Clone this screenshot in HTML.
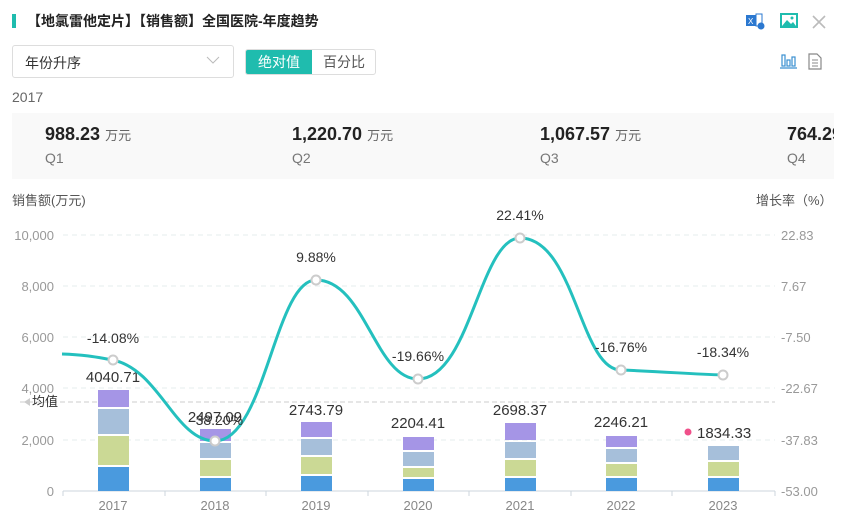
<!DOCTYPE html>
<html><head><meta charset="utf-8"><style>
*{margin:0;padding:0;box-sizing:border-box}
body{width:844px;height:524px;background:#fff;font-family:"Liberation Sans","Noto Sans CJK SC",sans-serif;position:relative;overflow:hidden;color:#333}
.a{position:absolute}
</style></head><body>
<div class="a" style="left:12px;top:14px;width:4px;height:14px;background:#1fbcae"></div>
<div class="a" style="left:27px;top:11px;font-size:14px;font-weight:bold;color:#222">【地氯雷他定片】【销售额】全国医院-年度趋势</div>
<svg class="a" style="left:746px;top:12px" width="20" height="18"><rect x="0" y="3" width="10" height="11" fill="#2b78d0"/><text x="2" y="12" font-size="8" fill="#fff" font-family="Liberation Sans">X</text><rect x="10" y="2" width="6" height="12" fill="none" stroke="#2b78d0"/><circle cx="15" cy="14" r="3.5" fill="#2b78d0"/></svg>
<svg class="a" style="left:780px;top:13px" width="18" height="16"><rect x="1" y="1" width="16" height="13" fill="none" stroke="#1fbcae" stroke-width="2"/><path d="M2 13 L7 7 L11 11 L13 9 L16 13Z" fill="#1fbcae"/><circle cx="12" cy="5" r="1.5" fill="#1fbcae"/></svg>
<svg class="a" style="left:811px;top:14px" width="16" height="16"><path d="M2 2L14 14M14 2L2 14" stroke="#bbb" stroke-width="1.6"/></svg>
<div class="a" style="left:12px;top:45px;width:222px;height:33px;border:1px solid #ddd;border-radius:3px;font-size:14px;padding:7px 12px">年份升序</div>
<svg class="a" style="left:206px;top:56px" width="14" height="8"><path d="M1 1L7 7L13 1" fill="none" stroke="#bbb"/></svg>
<div class="a" style="left:245px;top:49px;width:131px;height:26px;border:1px solid #ddd;border-radius:3px;overflow:hidden;font-size:14px">
<div class="a" style="left:0;top:0;width:66px;height:26px;background:#1fbcae;color:#fff;text-align:center;line-height:24px">绝对值</div>
<div class="a" style="left:66px;top:0;width:64px;height:26px;color:#555;text-align:center;line-height:24px">百分比</div></div>
<svg class="a" style="left:780px;top:53px" width="17" height="16"><g fill="none" stroke="#3a8fd0" stroke-width="1.2"><rect x="2" y="2" width="3" height="11"/><rect x="7" y="7" width="3" height="6"/><rect x="12" y="4" width="3" height="9"/><path d="M0 15H17"/></g></svg>
<svg class="a" style="left:808px;top:53px" width="14" height="17"><path d="M1 1H9L13 5V16H1Z" fill="none" stroke="#888" stroke-width="1.2"/><path d="M4 7H10M4 10H10M4 13H10" stroke="#888"/></svg>
<div class="a" style="left:12px;top:89px;font-size:14px;color:#666">2017</div>
<div class="a" style="left:12px;top:113px;width:822px;height:66px;background:#f9f9f9"></div>
<div class="a" style="left:45px;top:124px;font-size:18px;font-weight:bold;color:#222">988.23 <span style="font-size:13px;font-weight:normal;color:#666">万元</span></div>
<div class="a" style="left:45px;top:150px;font-size:14px;color:#777">Q1</div>
<div class="a" style="left:292px;top:124px;font-size:18px;font-weight:bold;color:#222">1,220.70 <span style="font-size:13px;font-weight:normal;color:#666">万元</span></div>
<div class="a" style="left:292px;top:150px;font-size:14px;color:#777">Q2</div>
<div class="a" style="left:540px;top:124px;font-size:18px;font-weight:bold;color:#222">1,067.57 <span style="font-size:13px;font-weight:normal;color:#666">万元</span></div>
<div class="a" style="left:540px;top:150px;font-size:14px;color:#777">Q3</div>
<div class="a" style="left:787px;top:124px;font-size:18px;font-weight:bold;color:#222;white-space:nowrap;width:47px;overflow:hidden">764.29</div>
<div class="a" style="left:787px;top:150px;font-size:14px;color:#777">Q4</div>
<div class="a" style="left:12px;top:190px;font-size:13px;color:#555">销售额(万元)</div>
<div class="a" style="left:756px;top:190px;font-size:13px;color:#555">增长率（%）</div>
<svg class="a" style="left:0;top:0" width="844" height="524" font-family="Liberation Sans,Noto Sans CJK SC,sans-serif">
<g stroke="#e6ecee" stroke-dasharray="5,4"><path d="M63 235H775M63 286H775M63 337H775M63 388H775M63 440H775"/></g>
<path d="M20 402H775" stroke="#ccc" stroke-dasharray="5,3"/>
<g font-size="13" fill="#999" text-anchor="end"><text x="54" y="240">10,000</text><text x="54" y="291">8,000</text><text x="54" y="342">6,000</text><text x="54" y="393">4,000</text><text x="54" y="445">2,000</text><text x="54" y="496">0</text></g>
<g font-size="13" fill="#999"><text x="781" y="240">22.83</text><text x="781" y="291">7.67</text><text x="781" y="342">-7.50</text><text x="781" y="393">-22.67</text><text x="781" y="445">-37.83</text><text x="781" y="496">-53.00</text></g>
<path d="M63 491H775" stroke="#ccd6dc"/>
<g stroke="#ccd6dc"><path d="M63 491v5M165 491v5M266 491v5M368 491v5M469 491v5M571 491v5M672 491v5M775 491v5"/></g>
<g font-size="13" fill="#888" text-anchor="middle"><text x="113" y="510">2017</text><text x="215" y="510">2018</text><text x="316" y="510">2019</text><text x="418" y="510">2020</text><text x="520" y="510">2021</text><text x="621" y="510">2022</text><text x="723" y="510">2023</text></g>
<g>
<rect x="98" y="467" width="31" height="24" fill="#4a9ade"/><rect x="98" y="436" width="31" height="29" fill="#cbd995"/><rect x="98" y="409" width="31" height="25" fill="#a6bfda"/><rect x="98" y="390" width="31" height="17" fill="#a595e6"/>
<rect x="200" y="478" width="31" height="13" fill="#4a9ade"/><rect x="200" y="460" width="31" height="16" fill="#cbd995"/><rect x="200" y="443" width="31" height="15" fill="#a6bfda"/><rect x="200" y="429" width="31" height="12" fill="#a595e6"/>
<rect x="301" y="476" width="31" height="15" fill="#4a9ade"/><rect x="301" y="457" width="31" height="17" fill="#cbd995"/><rect x="301" y="439" width="31" height="16" fill="#a6bfda"/><rect x="301" y="422" width="31" height="15" fill="#a595e6"/>
<rect x="403" y="479" width="31" height="12" fill="#4a9ade"/><rect x="403" y="468" width="31" height="9" fill="#cbd995"/><rect x="403" y="452" width="31" height="14" fill="#a6bfda"/><rect x="403" y="437" width="31" height="13" fill="#a595e6"/>
<rect x="505" y="478" width="31" height="13" fill="#4a9ade"/><rect x="505" y="460" width="31" height="16" fill="#cbd995"/><rect x="505" y="442" width="31" height="16" fill="#a6bfda"/><rect x="505" y="423" width="31" height="17" fill="#a595e6"/>
<rect x="606" y="478" width="31" height="13" fill="#4a9ade"/><rect x="606" y="464" width="31" height="12" fill="#cbd995"/><rect x="606" y="449" width="31" height="13" fill="#a6bfda"/><rect x="606" y="436" width="31" height="11" fill="#a595e6"/>
<rect x="708" y="478" width="31" height="13" fill="#4a9ade"/><rect x="708" y="462" width="31" height="14" fill="#cbd995"/><rect x="708" y="446" width="31" height="14" fill="#a6bfda"/>
</g>
<path d="M24 402l6-4v8z" fill="#ccc"/>
<text x="32" y="406" font-size="13" fill="#333">均值</text>
<g font-size="15" fill="#333" text-anchor="middle"><text x="113" y="382">4040.71</text><text x="215" y="422">2497.09</text><text x="316" y="415">2743.79</text><text x="418" y="428">2204.41</text><text x="520" y="415">2698.37</text><text x="621" y="427">2246.21</text></g>
<circle cx="688" cy="432" r="3.5" fill="#f0508a"/><text x="697" y="438" font-size="15" fill="#333">1834.33</text>
<path d="M62 354 C90 355,100 358,113 360 C160 370,175 441,215 441 C265 441,275 280,316 280 C365 280,375 379,418 379 C470 379,480 238,520 238 C575 238,580 370,621 370 C670 372,690 374,723 375" fill="none" stroke="#24c0be" stroke-width="3"/>
<g fill="#fff" stroke="#ccc" stroke-width="2"><circle cx="113" cy="360" r="4.5"/><circle cx="215" cy="441" r="4.5"/><circle cx="316" cy="280" r="4.5"/><circle cx="418" cy="379" r="4.5"/><circle cx="520" cy="238" r="4.5"/><circle cx="621" cy="370" r="4.5"/><circle cx="723" cy="375" r="4.5"/></g>
<g font-size="14" fill="#333" text-anchor="middle"><text x="113" y="343">-14.08%</text><text x="217" y="425">-38.20%</text><text x="316" y="262">9.88%</text><text x="418" y="361">-19.66%</text><text x="520" y="220">22.41%</text><text x="621" y="352">-16.76%</text><text x="723" y="357">-18.34%</text></g>
</svg>
</body></html>
